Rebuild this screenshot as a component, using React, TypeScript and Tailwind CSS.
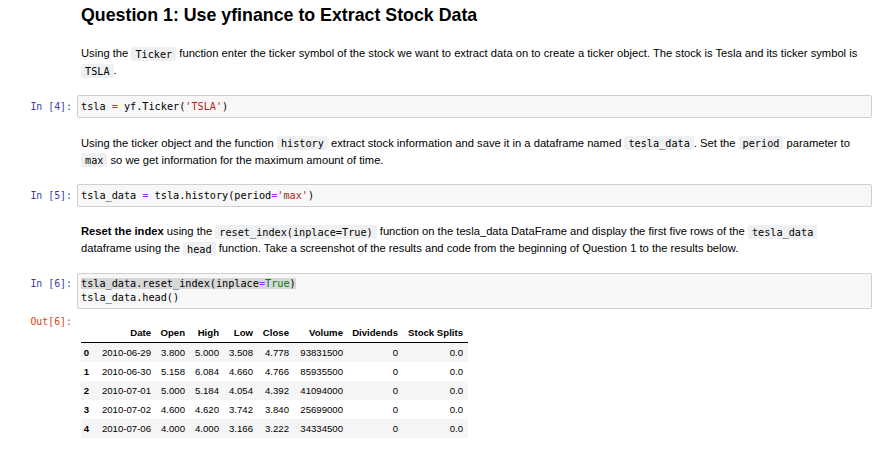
import React from "react";

const mono = "font-['DejaVu_Sans_Mono',monospace]";

const rows = [
  ["0", "2010-06-29", "3.800", "5.000", "3.508", "4.778", "93831500", "0", "0.0"],
  ["1", "2010-06-30", "5.158", "6.084", "4.660", "4.766", "85935500", "0", "0.0"],
  ["2", "2010-07-01", "5.000", "5.184", "4.054", "4.392", "41094000", "0", "0.0"],
  ["3", "2010-07-02", "4.600", "4.620", "3.742", "3.840", "25699000", "0", "0.0"],
  ["4", "2010-07-06", "4.000", "4.000", "3.166", "3.222", "34334500", "0", "0.0"],
];

const headers = ["", "Date", "Open", "High", "Low", "Close", "Volume", "Dividends", "Stock Splits"];
const widths = [13, 62, 34, 34, 34, 36, 54, 55, 65];

function Code({ children }: { children: React.ReactNode }) {
  return (
    <code className={`${mono} rounded-[2px] bg-[#eff0f1] px-[4px] py-[1.5px] text-[10.2px] text-black`}>
      {children}
    </code>
  );
}

function Prompt({ label, out }: { label: string; out?: boolean }) {
  return (
    <div
      className={`${mono} w-[77px] shrink-0 pr-[5px] text-right text-[9.9px] leading-[13.6px] ${
        out ? "text-[#d84315]" : "pt-[4.5px] text-[#303f9f]"
      }`}
    >
      {label}
    </div>
  );
}

function CodeCell({ label, children }: { label: string; children: React.ReactNode }) {
  return (
    <div className="flex">
      <Prompt label={label} />
      <div
        className={`${mono} w-[795px] rounded-[2px] border border-[#cfcfcf] bg-[#f7f7f7] px-[3px] py-[3.5px] text-[10.2px] leading-[13.6px] text-black`}
      >
        {children}
      </div>
    </div>
  );
}

function Markdown({ children, className = "" }: { children: React.ReactNode; className?: string }) {
  return (
    <div className={`flex ${className}`}>
      <div className="w-[77px] shrink-0" />
      <div className="whitespace-nowrap pl-[4px] text-[11.2px] leading-[17px]">{children}</div>
    </div>
  );
}

const op = "text-[#aa22ff]";
const str = "text-[#ba2121]";

export default function App() {
  return (
    <div className="h-[457px] w-[885px] overflow-hidden bg-white font-['Liberation_Sans',Arial,sans-serif] text-black">
      <h2 className="pl-[81px] pt-[4px] text-[17.8px] font-bold leading-[22px]">
        Question 1: Use yfinance to Extract Stock Data
      </h2>

      <Markdown className="mt-[19px]">
        Using the <Code>Ticker</Code> function enter the ticker symbol of the stock we want to extract data on to create a
        ticker object. The stock is Tesla and its ticker symbol is
        <br />
        <Code>TSLA</Code>.
      </Markdown>

      <div className="mt-[16px]">
        <CodeCell label="In [4]:">
          tsla <span className={op}>=</span> yf.Ticker(<span className={str}>'TSLA'</span>)
        </CodeCell>
      </div>

      <Markdown className="mt-[17px]">
        Using the ticker object and the function <Code>history</Code> extract stock information and save it in a dataframe
        named <Code>tesla_data</Code>. Set the <Code>period</Code> parameter to
        <br />
        <Code>max</Code> so we get information for the maximum amount of time.
      </Markdown>

      <div className="mt-[15.5px]">
        <CodeCell label="In [5]:">
          tsla_data <span className={op}>=</span> tsla.history(period<span className={op}>=</span>
          <span className={str}>'max'</span>)
        </CodeCell>
      </div>

      <Markdown className="mt-[16.6px]">
        <b>Reset the index</b> using the <Code>reset_index(inplace=True)</Code> function on the tesla_data DataFrame and
        display the first five rows of the <Code>tesla_data</Code>
        <br />
        dataframe using the <Code>head</Code> function. Take a screenshot of the results and code from the beginning of
        Question 1 to the results below.
      </Markdown>

      <div className="mt-[15.7px]">
        <CodeCell label="In [6]:">
          <span className="bg-[#d7d7d7]">
            tsla_data.reset_index(inplace<span className={op}>=</span>
            <span className="text-[#008000]">True</span>)
          </span>
          <br />
          tsla_data.head()
        </CodeCell>
      </div>

      <div className="mt-[5.6px] flex">
        <Prompt label="Out[6]:" out />
        <div className="pl-[4px] pt-[8px]">
          <table className="table-fixed border-collapse text-[9.6px] leading-[19px]">
            <thead>
              <tr className="border-b border-black">
                {headers.map((h, i) => (
                  <th key={i} style={{ width: widths[i] }} className="h-[19px] p-0 pr-[5px] text-right font-bold">
                    {h}
                  </th>
                ))}
              </tr>
            </thead>
            <tbody>
              {rows.map((r, ri) => (
                <tr key={ri} className={ri % 2 === 0 ? "bg-[#f5f5f5]" : "bg-white"}>
                  {r.map((c, ci) =>
                    ci === 0 ? (
                      <th key={ci} className="h-[19px] p-0 pr-[5px] text-right font-bold">
                        {c}
                      </th>
                    ) : (
                      <td key={ci} className="h-[19px] p-0 pr-[5px] text-right">
                        {c}
                      </td>
                    )
                  )}
                </tr>
              ))}
            </tbody>
          </table>
        </div>
      </div>
    </div>
  );
}
